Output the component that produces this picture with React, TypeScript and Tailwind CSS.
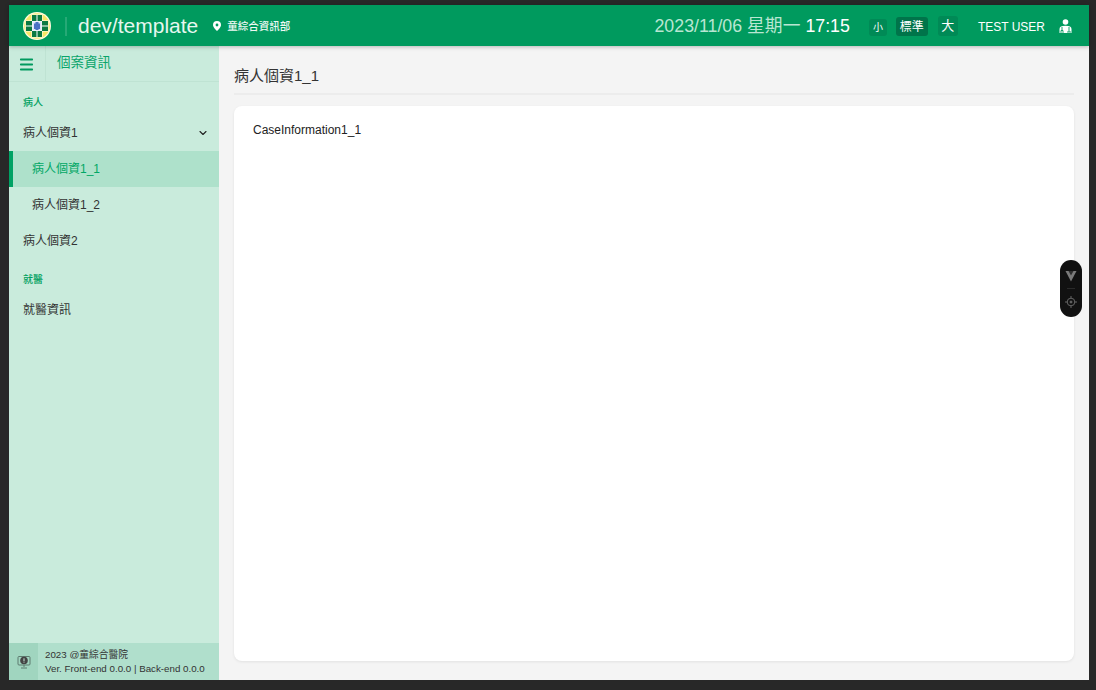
import { ChevronDown, Menu } from "lucide-react";

const font = "font-['Liberation_Sans','Noto_Sans_CJK_TC',sans-serif]";

function Logo() {
  return (
    <svg width="28" height="28" viewBox="0 0 28 28" className="shrink-0">
      <circle cx="14" cy="14" r="14" fill="#fffbe0" />
      <circle cx="14" cy="14" r="12.800" fill="#f6e766" />
      {/* cross arms, split by white lines */}
      <rect x="8.500" y="2.500" width="11" height="23" fill="#fff" />
      <rect x="2.500" y="8.500" width="23" height="11" fill="#fff" />
      <rect x="9" y="3" width="4.500" height="6" fill="#0c7a42" />
      <rect x="14.500" y="3" width="4.500" height="6" fill="#0c7a42" />
      <rect x="9" y="19" width="4.500" height="6" fill="#0c7a42" />
      <rect x="14.500" y="19" width="4.500" height="6" fill="#0c7a42" />
      <rect x="3" y="9" width="6" height="4.500" fill="#0c7a42" />
      <rect x="3" y="14.500" width="6" height="4.500" fill="#0c7a42" />
      <rect x="19" y="9" width="6" height="4.500" fill="#0c7a42" />
      <rect x="19" y="14.500" width="6" height="4.500" fill="#0c7a42" />
      {/* center figure */}
      <rect x="9.500" y="9.500" width="9" height="9" fill="#dbe6f7" />
      <path d="M12.500 10h3v1.500h1.500v5.500h-1.500v1h-3v-1H11v-5.500h1.500z" fill="#4a72c4" />
    </svg>
  );
}

function DoctorIcon() {
  return (
    <svg width="13" height="14" viewBox="0 0 13 14" fill="#fff" className="shrink-0">
      <circle cx="6.500" cy="3" r="2.800" />
      <path d="M0.500 14v-4C0.500 8 2.500 6.800 6.500 6.800S12.500 8 12.500 10v4z" />
      <path d="M3 8v3M2 14v-2.500h2V14M10 8v3M9 14v-2h2v2" stroke="#009a5e" strokeWidth="0.900" fill="none" />
    </svg>
  );
}

function NavItem({ label, sub, active, chevron }: { label: string; sub?: boolean; active?: boolean; chevron?: boolean }) {
  return (
    <div
      className={`flex h-9 items-center justify-between pr-[10px] text-[12px] ${sub ? "pl-[23px]" : "pl-[14px]"} ${
        active ? "border-l-[4px] border-[#00a264] bg-[#aee1cb] !pl-[19px] text-[#00a765]" : "text-[#333]"
      }`}
    >
      <span>{label}</span>
      {chevron && <ChevronDown size={12} strokeWidth={2.2} color="#222" />}
    </div>
  );
}

function SizeButton({ label, className }: { label: string; className: string }) {
  return <div className={`flex items-center justify-center rounded-[3px] text-white ${className}`}>{label}</div>;
}

export default function App() {
  return (
    <div className={`relative flex h-[690px] w-[1096px] flex-col overflow-hidden bg-[#282828] pb-[10px] pl-[9px] pr-[7px] pt-[5px] ${font}`}>
      <header className="relative z-10 flex h-[41px] shrink-0 items-center bg-[#009a5e] pl-[14px] pr-[17px] pt-px shadow-[0_1px_4px_rgba(0,0,0,0.25)]">
        <Logo />
        <div className="ml-[14px] h-[19px] w-[2px] bg-white/15" />
        <div className="mb-[2px] ml-[11px] text-[21px] leading-none text-[#e6f7ef]">dev/template</div>
        <svg width="8" height="10" viewBox="0 0 8 10" className="ml-[15px] shrink-0">
          <path fillRule="evenodd" d="M4 0a4 4 0 0 1 4 4c0 2.500-4 6-4 6S0 6.500 0 4a4 4 0 0 1 4-4zm0 2.600a1.400 1.400 0 1 0 0 2.800 1.400 1.400 0 0 0 0-2.800z" fill="#fff" />
        </svg>
        <div className="ml-[6px] pt-[2px] text-[10.500px] font-medium text-[#eef9f4]">童綜合資訊部</div>
        <div className="ml-auto pt-[2px] text-[17.800px] leading-none text-[#b9e6d2]">
          2023/11/06 星期一 <span className="text-white">17:15</span>
        </div>
        <div className="ml-[19px] flex h-[20px] items-end">
          <SizeButton label="小" className="h-[17px] w-[18px] bg-[#008a56] text-[10px]" />
          <SizeButton label="標準" className="ml-[9px] h-[19px] w-[32px] bg-[#00744a] text-[12px]" />
          <SizeButton label="大" className="ml-[10px] h-[20px] w-[20px] bg-[#008a56] text-[13px]" />
        </div>
        <div className="ml-[20px] pt-[2px] text-[12px] text-white">TEST USER</div>
        <div className="ml-[14px]">
          <DoctorIcon />
        </div>
      </header>

      <div className="flex min-h-0 flex-1">
        <aside className="flex w-[210px] shrink-0 flex-col bg-[#c9ebdc]">
          <div className="flex h-[36px] shrink-0 items-center border-b border-[#bfe3d3]">
            <div className="flex h-full w-[37px] items-center justify-center border-r border-[#bfe3d3] pr-[1px] pt-[1px]">
              <Menu size={17} strokeWidth={2.6} color="#009a5e" />
            </div>
            <div className="ml-[11px] text-[13.500px] text-[#0aa56b]">個案資訊</div>
          </div>
          <div className="flex h-[33px] shrink-0 items-end pl-[14px] text-[10px] font-medium text-[#00a060]">
            <span className="mb-[5px]">病人</span>
          </div>
          <NavItem label="病人個資1" chevron />
          <NavItem label="病人個資1_1" sub active />
          <NavItem label="病人個資1_2" sub />
          <NavItem label="病人個資2" />
          <div className="mt-[10px] flex h-[21px] shrink-0 items-center pl-[14px] text-[10px] font-medium text-[#00a060]">就醫</div>
          <div className="flex h-[40px] items-center pl-[14px] text-[12px] text-[#333]">就醫資訊</div>
          <div className="mt-auto flex h-[37px] shrink-0 bg-[#b0dfcc]">
            <div className="flex w-[29px] items-center justify-center bg-[#a0d5bf]">
              <svg width="14" height="14" viewBox="0 0 14 14" fill="none">
                <rect x="1" y="1.500" width="12" height="8.500" rx="1" stroke="#5d7a6e" />
                <circle cx="7" cy="5.500" r="3.800" fill="#444" />
                <rect x="6.500" y="3.300" width="1" height="2.700" fill="#c9ebdc" />
                <rect x="6.500" y="6.600" width="1" height="1" fill="#c9ebdc" />
                <path d="M7 10v2M4 13h6" stroke="#5d7a6e" />
              </svg>
            </div>
            <div className="ml-[7px] flex flex-col justify-center text-[9.750px] leading-[14px] text-[#333]">
              <div>2023 @童綜合醫院</div>
              <div>Ver. Front-end 0.0.0 | Back-end 0.0.0</div>
            </div>
          </div>
        </aside>

        <main className="flex min-w-0 flex-1 flex-col bg-[#f4f4f4] pb-[19px] pl-[15px] pr-[15px]">
          <div className="flex h-[49px] shrink-0 items-center border-b-2 border-[#ececec] pt-[13px] text-[15px] text-[#333]">
            病人個資1_1
          </div>
          <div className="mt-[11px] flex-1 rounded-[8px] bg-white px-[19px] py-[17px] text-[12px] leading-[14px] text-[#222] shadow-[0_1px_3px_rgba(0,0,0,0.08)]">
            CaseInformation1_1
          </div>
        </main>
      </div>

      {/* floating dev tools pill */}
      <div className="absolute left-[1060px] top-[260px] z-20 flex h-[57px] w-[22px] flex-col items-center rounded-full bg-[#111]">
        <svg width="12" height="12" viewBox="0 0 12 12" className="mt-[10px]">
          <path d="M0.500 1h11L6 11.500z" fill="#7a7a7a" />
          <path d="M3.500 1h5L6 5.500z" fill="#2e2e2e" />
        </svg>
        <div className="mt-[6px] h-px w-[8px] bg-[#2a2a2a]" />
        <svg width="12" height="12" viewBox="0 0 12 12" fill="none" className="mt-[7px]" stroke="#666">
          <circle cx="6" cy="6" r="3.800" />
          <circle cx="6" cy="6" r="1" fill="#666" />
          <path d="M6 0v2M6 10v2M0 6h2M10 6h2" />
        </svg>
      </div>
    </div>
  );
}
